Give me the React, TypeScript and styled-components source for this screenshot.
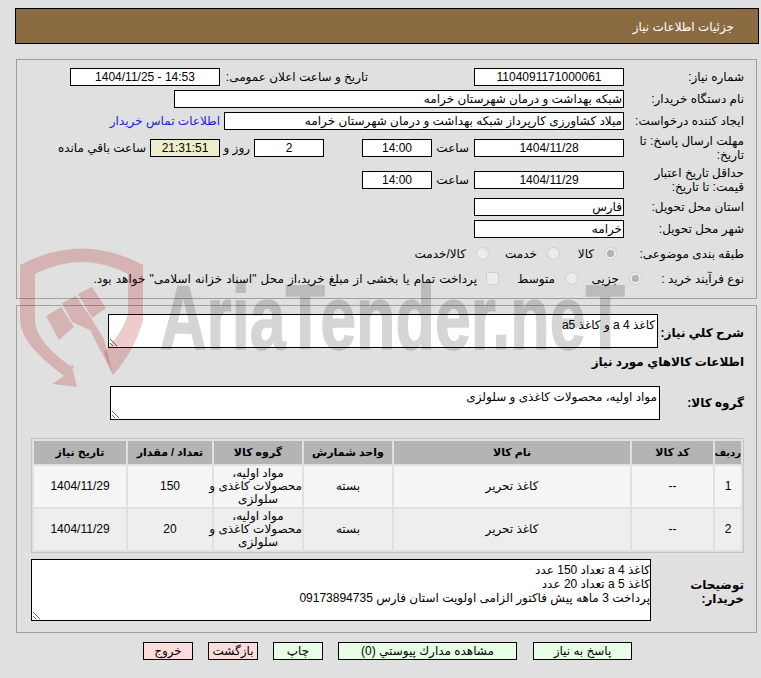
import React from "react";
import styled, { createGlobalStyle } from "styled-components";

const GlobalStyle = createGlobalStyle`
  html, body {
    margin: 0;
    padding: 0;
    background: #e0e0e0;
  }
  body {
    font-family: "Liberation Sans", "DejaVu Sans", sans-serif;
    font-size: 12px;
    color: #000;
  }
`;

const Page = styled.div`
  position: relative;
  width: 761px;
  height: 678px;
  overflow: hidden;
  direction: rtl;
  padding-top: 8px;
  box-sizing: border-box;
`;

const Watermark = styled.svg`
  position: absolute;
  left: 0;
  top: 0;
  width: 761px;
  height: 678px;
  z-index: 2;
  pointer-events: none;
`;

const Content = styled.div`
  position: relative;
  display: flex;
  flex-direction: column;
`;

const TitleBar = styled.div`
  box-sizing: border-box;
  height: 36px;
  margin: 0 2px 0 0;
  width: 744px;
  background: #8b6b41;
  border: 1px solid #000;
  color: #fff;
  padding: 0 24px 0 0;
  line-height: 36px;
  font-size: 12px;
`;

const Panel = styled.div`
  box-sizing: border-box;
  width: 741px;
  margin: 15px 4px 0 0;
  height: 240px;
  border: 1px solid #a0a0a0;
  padding: 8px 12px 0 0;
  display: flex;
  flex-direction: column;
  gap: 4px;
`;

const LowerPanel = styled(Panel)`
  margin-top: 6px;
  height: 328px;
  gap: 0;
`;

const Row = styled.div<{ $tall?: boolean; $top?: number }>`
  display: flex;
  align-items: center;
  height: ${({ $tall }) => ($tall ? 28 : 18)}px;
  margin-top: ${({ $top }) => $top ?? 0}px;
`;

const BoxRow = styled(Row)<{ $height: number }>`
  height: ${({ $height }) => $height}px;
`;

const Label = styled.div<{ $bold?: boolean; $width?: number; $drop?: boolean }>`
  width: ${({ $width }) => $width ?? 120}px;
  flex: none;
  line-height: 14px;
  font-weight: ${({ $bold }) => ($bold ? 700 : 400)};
  padding-top: ${({ $drop }) => ($drop ? 4 : 0)}px;
`;

const Field = styled.div<{ $width: number; $center?: boolean; $tint?: boolean }>`
  box-sizing: border-box;
  flex: none;
  width: ${({ $width }) => $width}px;
  height: 18px;
  line-height: 16px;
  border: 1px solid #000;
  background: ${({ $tint }) => ($tint ? "#eeeecc" : "#fff")};
  padding: 0 1px;
  text-align: ${({ $center }) => ($center ? "center" : "right")};
  white-space: nowrap;
  overflow: hidden;
`;

const Gap = styled.div<{ $width: number; $inset?: number }>`
  box-sizing: border-box;
  flex: none;
  width: ${({ $width }) => $width}px;
  padding-right: ${({ $inset }) => $inset ?? 0}px;
  white-space: nowrap;
  text-align: right;
`;

const ContactLink = styled.a`
  color: #2222dd;
  margin-right: 4px;
  text-decoration: none;
`;

const Radio = styled.input`
  appearance: none;
  flex: none;
  box-sizing: border-box;
  width: 13px;
  height: 13px;
  margin: 0 0 2px 10px;
  border-radius: 50%;
  background: #ececec;
  border: 1px solid #cfcfcf;

  &:checked {
    background: radial-gradient(circle, #b4b4b4 0 3.5px, #ececec 4px);
  }
`;

const Check = styled.input`
  appearance: none;
  flex: none;
  box-sizing: border-box;
  width: 13px;
  height: 13px;
  margin: 0 0 2px 9px;
  border-radius: 2px;
  background: #ececec;
  border: 1px solid #cfcfcf;
`;

const Option = styled.label<{ $width?: number; $start?: number; $spread?: boolean }>`
  display: flex;
  align-items: center;
  flex: none;
  width: ${({ $width }) => ($width ? `${$width}px` : "auto")};
  margin-right: ${({ $start }) => $start ?? 0}px;
  word-spacing: ${({ $spread }) => ($spread ? 0.8 : 0)}px;
  white-space: nowrap;
`;

const Note = styled.textarea<{ $width: number; $height: number; $inset?: number }>`
  box-sizing: border-box;
  display: block;
  flex: none;
  width: ${({ $width }) => $width}px;
  height: ${({ $height }) => $height}px;
  margin: 0;
  padding: 3px ${({ $inset }) => $inset ?? 2}px 0 2px;
  border: 1px solid #000;
  border-radius: 0;
  background: #fff;
  color: #000;
  outline: none;
  font: inherit;
  line-height: 14px;
  direction: rtl;
  overflow: hidden;
`;

const GoodsTable = styled.table`
  table-layout: fixed;
  width: 713px;
  border: 1px solid #c4c4c4;
  border-spacing: 2px;
  margin: 18px 0 0 0;
  text-align: center;
`;

const Head = styled.th<{ $tight?: boolean }>`
  background: #b4b4b4;
  height: 23px;
  padding: 0;
  font-size: ${({ $tight }) => ($tight ? 10 : 11)}px;
  font-weight: 700;
  white-space: nowrap;
`;

const Cell = styled.td<{ $even?: boolean }>`
  background: ${({ $even }) => ($even ? "#eeeeee" : "#f5f5f5")};
  height: 41px;
  padding: 0;
  line-height: 13px;
  white-space: nowrap;
`;

const ButtonBar = styled.div`
  display: flex;
  margin: 9px 129px 0 0;
`;

const ActionButton = styled.button<{ $width: number; $gap: number; $danger?: boolean }>`
  box-sizing: border-box;
  flex: none;
  width: ${({ $width }) => $width}px;
  height: 18px;
  margin-left: ${({ $gap }) => $gap}px;
  padding: 0;
  border: 1px solid #000;
  border-radius: 0;
  background: ${({ $danger }) => ($danger ? "#ffdcdc" : "#e6ffe6")};
  font: inherit;
  color: #000;
`;

const columns = [26, 81, 236, 88, 88, 84, 92];
const headers = ["رديف", "کد کالا", "نام کالا", "واحد شمارش", "گروه کالا", "تعداد / مقدار", "تاریخ نیاز"];
const items = [
  { row: 1, count: 150 },
  { row: 2, count: 20 },
];

export default function App() {
  return (
    <Page>
      <GlobalStyle />
      <Watermark viewBox="0 0 761 678">
        <g fill="#aa0000" fillOpacity="0.2">
          <path d="M20 265 Q82 232 143 265 L143 320 Q135 350 113 375 L104 352 Q125 330 128 312 L128 274 Q82 250 35 274 L35 322 Q38 345 75 369 L71 362 L77 387 L52 384 L64 376 Q22 345 20 322 Z" />
          <path d="M46 316 L61 307 L74 327 L59 340 Z M62 303 L76 296 L91 318 L104 339 L113 375 L90 330 L72 322 Z M78 294 L92 287 L106 308 L92 318 Z" />
        </g>
        <text
          x="160"
          y="349"
          fontFamily="Liberation Sans, sans-serif"
          fontWeight="700"
          fontSize="90"
          fill="#000"
          stroke="#000"
          strokeWidth="1.5"
          opacity="0.16"
          textLength="465"
          lengthAdjust="spacingAndGlyphs"
          direction="ltr"
        >
          AriaTender.neT
        </text>
      </Watermark>
      <Content>
        <TitleBar>جزئیات اطلاعات نیاز</TitleBar>
        <Panel>
          <Row>
            <Label>شماره نیاز:</Label>
            <Field $width={150} $center>1104091171000061</Field>
            <Gap $width={106} />
            <Label $width={148}>تاریخ و ساعت اعلان عمومی:</Label>
            <Field $width={150} $center>14:53 - 1404/11/25</Field>
          </Row>
          <Row>
            <Label>نام دستگاه خریدار:</Label>
            <Field $width={450}>شبکه بهداشت و درمان شهرستان خرامه</Field>
          </Row>
          <Row>
            <Label>ایجاد کننده درخواست:</Label>
            <Field $width={400}>میلاد کشاورزی کارپرداز شبکه بهداشت و درمان شهرستان خرامه</Field>
            <ContactLink>اطلاعات تماس خریدار</ContactLink>
          </Row>
          <Row $tall>
            <Label>مهلت ارسال پاسخ: تا تاریخ:</Label>
            <Field $width={150} $center>1404/11/28</Field>
            <Gap $width={42} $inset={5}>ساعت</Gap>
            <Field $width={70} $center>14:00</Field>
            <Gap $width={38} />
            <Field $width={70} $center>2</Field>
            <Gap $width={34} $inset={4}>روز و</Gap>
            <Field $width={70} $center $tint>21:31:51</Field>
            <Gap $width={4} />
            <div>ساعت باقي مانده</div>
          </Row>
          <Row $tall>
            <Label>حداقل تاریخ اعتبار قیمت: تا تاریخ:</Label>
            <Field $width={150} $center>1404/11/29</Field>
            <Gap $width={42} $inset={5}>ساعت</Gap>
            <Field $width={70} $center>14:00</Field>
          </Row>
          <Row>
            <Label>استان محل تحویل:</Label>
            <Field $width={150}>فارس</Field>
          </Row>
          <Row>
            <Label>شهر محل تحویل:</Label>
            <Field $width={150}>خرامه</Field>
          </Row>
          <Row $top={3}>
            <Label>طبقه بندی موضوعی:</Label>
            <Option $width={57} $start={7}>
              <Radio type="radio" name="category" defaultChecked disabled />
              کالا
            </Option>
            <Option $width={71}>
              <Radio type="radio" name="category" disabled />
              خدمت
            </Option>
            <Option>
              <Radio type="radio" name="category" disabled />
              کالا/خدمت
            </Option>
          </Row>
          <Row $top={3}>
            <Label $width={102}>نوع فرآیند خرید :</Label>
            <Option $width={64}>
              <Radio type="radio" name="process" defaultChecked disabled />
              جزیی
            </Option>
            <Option $width={79}>
              <Radio type="radio" name="process" disabled />
              متوسط
            </Option>
            <Option $spread>
              <Check type="checkbox" disabled />
              پرداخت تمام یا بخشی از مبلغ خرید،از محل "اسناد خزانه اسلامی" خواهد بود.
            </Option>
          </Row>
        </Panel>
        <LowerPanel>
          <BoxRow $height={34}>
            <Label $bold $drop $width={86}>شرح کلي نياز:</Label>
            <Note $width={550} $height={34} readOnly value="کاغذ a 4 و کاغذ a5" />
          </BoxRow>
          <Row $top={5}>
            <Label $bold $width={300}>اطلاعات كالاهاي مورد نياز</Label>
          </Row>
          <BoxRow $top={15} $height={34}>
            <Label $bold $width={84}>گروه کالا:</Label>
            <Note $width={550} $height={34} readOnly value="مواد اولیه، محصولات کاغذی و سلولزی" />
          </BoxRow>
          <GoodsTable>
            <colgroup>
              {columns.map((w, i) => (
                <col key={i} style={{ width: w }} />
              ))}
            </colgroup>
            <thead>
              <tr>
                {headers.map((h, i) => (
                  <Head key={h} $tight={i === 0}>{h}</Head>
                ))}
              </tr>
            </thead>
            <tbody>
              {items.map(({ row, count }) => (
                <tr key={row}>
                  <Cell $even={row === 2}>{row}</Cell>
                  <Cell $even={row === 2}>--</Cell>
                  <Cell $even={row === 2}>کاغذ تحریر</Cell>
                  <Cell $even={row === 2}>بسته</Cell>
                  <Cell $even={row === 2}>
                    مواد اولیه،
                    <br />
                    محصولات کاغذی و
                    <br />
                    سلولزی
                  </Cell>
                  <Cell $even={row === 2}>{count}</Cell>
                  <Cell $even={row === 2}>1404/11/29</Cell>
                </tr>
              ))}
            </tbody>
          </GoodsTable>
          <BoxRow $top={6} $height={62}>
            <Label $bold $drop $width={93}>توضیحات خریدار:</Label>
            <Note
              $width={620}
              $height={62}
              $inset={0}
              readOnly
              value={"کاغذ a 4 تعداد 150 عدد\nکاغذ a 5 تعداد 20 عدد\nپرداخت 3 ماهه پیش فاکتور الزامی اولویت استان فارس 09173894735"}
            />
          </BoxRow>
        </LowerPanel>
        <ButtonBar>
          <ActionButton $width={99} $gap={16}>پاسخ به نياز</ActionButton>
          <ActionButton $width={179} $gap={15}>مشاهده مدارك پيوستي (0)</ActionButton>
          <ActionButton $width={50} $gap={15}>چاپ</ActionButton>
          <ActionButton $width={50} $gap={15} $danger>بازگشت</ActionButton>
          <ActionButton $width={50} $gap={0} $danger>خروج</ActionButton>
        </ButtonBar>
      </Content>
    </Page>
  );
}
